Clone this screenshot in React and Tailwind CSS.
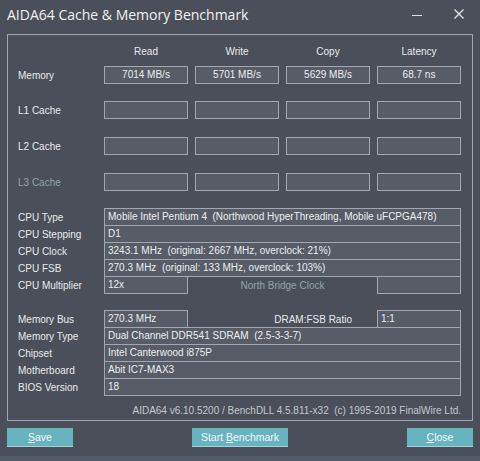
import React from "react";

const font = { fontFamily: '"Liberation Sans", Arial, sans-serif' };

function Box({ children, className = "", center }) {
  return (
    <div
      className={`h-[18px] border border-[#a3a7ad] bg-[#585c66] text-[#eceef0] leading-[16px] px-[3px] whitespace-nowrap overflow-hidden ${center ? "text-center" : ""} ${className}`}
    >
      {children}
    </div>
  );
}

function Label({ children, dim }) {
  return <div className={`w-[86px] shrink-0 ${dim ? "text-[#8fa4ac]" : "text-[#e8eaec]"}`}>{children}</div>;
}

function BenchRow({ label, values = ["", "", "", ""], dim, className = "" }) {
  return (
    <div className={`flex items-center ${className}`}>
      <Label dim={dim}>{label}</Label>
      <div className="flex gap-[7px]">
        {values.map((v, i) => (
          <Box key={i} center className="w-[84px]">{v}</Box>
        ))}
      </div>
    </div>
  );
}

function InfoRow({ label, children, first }) {
  return (
    <div className={`flex items-center ${first ? "" : "-mt-px"}`}>
      <Label>{label}</Label>
      {children}
    </div>
  );
}

function Btn({ children, className = "" }) {
  return (
    <button className={`h-[19px] bg-[#68b3c0] border-b border-[#9fd4dc] text-[#f4f8f9] text-[10.5px] leading-[18px] ${className}`}>
      {children}
    </button>
  );
}

export default function App() {
  return (
    <div className="w-[480px] h-[461px] bg-[#4b4f59] text-[10px] flex flex-col overflow-hidden" style={font}>
      <div className="h-[34px] flex items-start pt-[4px] pl-[7px] pr-[16px]">
        <div className="text-[14px] text-[#f2f2f2]" style={{ fontFamily: '"Open Sans", "Noto Sans", sans-serif' }}>
          AIDA64 Cache &amp; Memory Benchmark
        </div>
        <div className="ml-auto flex items-center gap-[32px] pt-[5px]">
          <div className="w-[10px] h-px bg-[#e0e0e0] mt-[3px]" />
          <svg width="10" height="10" viewBox="0 0 10 10" className="stroke-[#e6e6e6]">
            <path d="M0.5 0.5 L9.5 9.5 M9.5 0.5 L0.5 9.5" strokeWidth="1.3" fill="none" />
          </svg>
        </div>
      </div>

      <div className="mx-[7px] w-[466px] h-[387px] border border-[#a3a7ad] pl-[10px] flex flex-col">
        <div className="flex pt-[9px] h-[31px] text-[#e8eaec]">
          <div className="w-[86px]" />
          <div className="flex gap-[7px]">
            {["Read", "Write", "Copy", "Latency"].map((h) => (
              <div key={h} className="w-[84px] text-center">{h}</div>
            ))}
          </div>
        </div>

        <BenchRow label="Memory" values={["7014 MB/s", "5701 MB/s", "5629 MB/s", "68.7 ns"]} />
        <BenchRow label="L1 Cache" className="mt-[17px]" />
        <BenchRow label="L2 Cache" className="mt-[18px]" />
        <BenchRow label="L3 Cache" dim className="mt-[18px]" />

        <div className="mt-[17px] flex flex-col">
          <InfoRow first label="CPU Type">
            <Box className="w-[357px]">Mobile Intel Pentium 4&nbsp; (Northwood HyperThreading, Mobile uFCPGA478)</Box>
          </InfoRow>
          <InfoRow label="CPU Stepping">
            <Box className="w-[357px]">D1</Box>
          </InfoRow>
          <InfoRow label="CPU Clock">
            <Box className="w-[357px]">3243.1 MHz&nbsp; (original: 2667 MHz, overclock: 21%)</Box>
          </InfoRow>
          <InfoRow label="CPU FSB">
            <Box className="w-[357px]">270.3 MHz&nbsp; (original: 133 MHz, overclock: 103%)</Box>
          </InfoRow>
          <InfoRow label="CPU Multiplier">
            <Box className="w-[84px]">12x</Box>
            <div className="w-[189px] text-center text-[#8fa4ac]">North Bridge Clock</div>
            <Box className="w-[84px]" />
          </InfoRow>
        </div>

        <div className="mt-[16px] flex flex-col">
          <InfoRow first label="Memory Bus">
            <Box className="w-[84px]">270.3 MHz</Box>
            <div className="w-[189px] text-right pr-[25px] text-[#e8eaec]">DRAM:FSB Ratio</div>
            <Box className="w-[84px]">1:1</Box>
          </InfoRow>
          <InfoRow label="Memory Type">
            <Box className="w-[357px]">Dual Channel DDR541 SDRAM&nbsp; (2.5-3-3-7)</Box>
          </InfoRow>
          <InfoRow label="Chipset">
            <Box className="w-[357px]">Intel Canterwood i875P</Box>
          </InfoRow>
          <InfoRow label="Motherboard">
            <Box className="w-[357px]">Abit IC7-MAX3</Box>
          </InfoRow>
          <InfoRow label="BIOS Version">
            <Box className="w-[357px]">18</Box>
          </InfoRow>
        </div>

        <div className="mt-[7px] w-[443px] text-right text-[#c3c7cc] whitespace-nowrap">
          AIDA64 v6.10.5200 / BenchDLL 4.5.811-x32&nbsp; (c) 1995-2019 FinalWire Ltd.
        </div>
      </div>

      <div className="flex items-start pt-[7px] pl-[7px] h-[35px]">
        <Btn className="w-[66px]"><span className="underline">S</span>ave</Btn>
        <Btn className="w-[96px] ml-[119px]">Start <span className="underline">B</span>enchmark</Btn>
        <Btn className="w-[66px] ml-[119px]"><span className="underline">C</span>lose</Btn>
      </div>
      <div className="flex-1 bg-[#525a67]" />
    </div>
  );
}
